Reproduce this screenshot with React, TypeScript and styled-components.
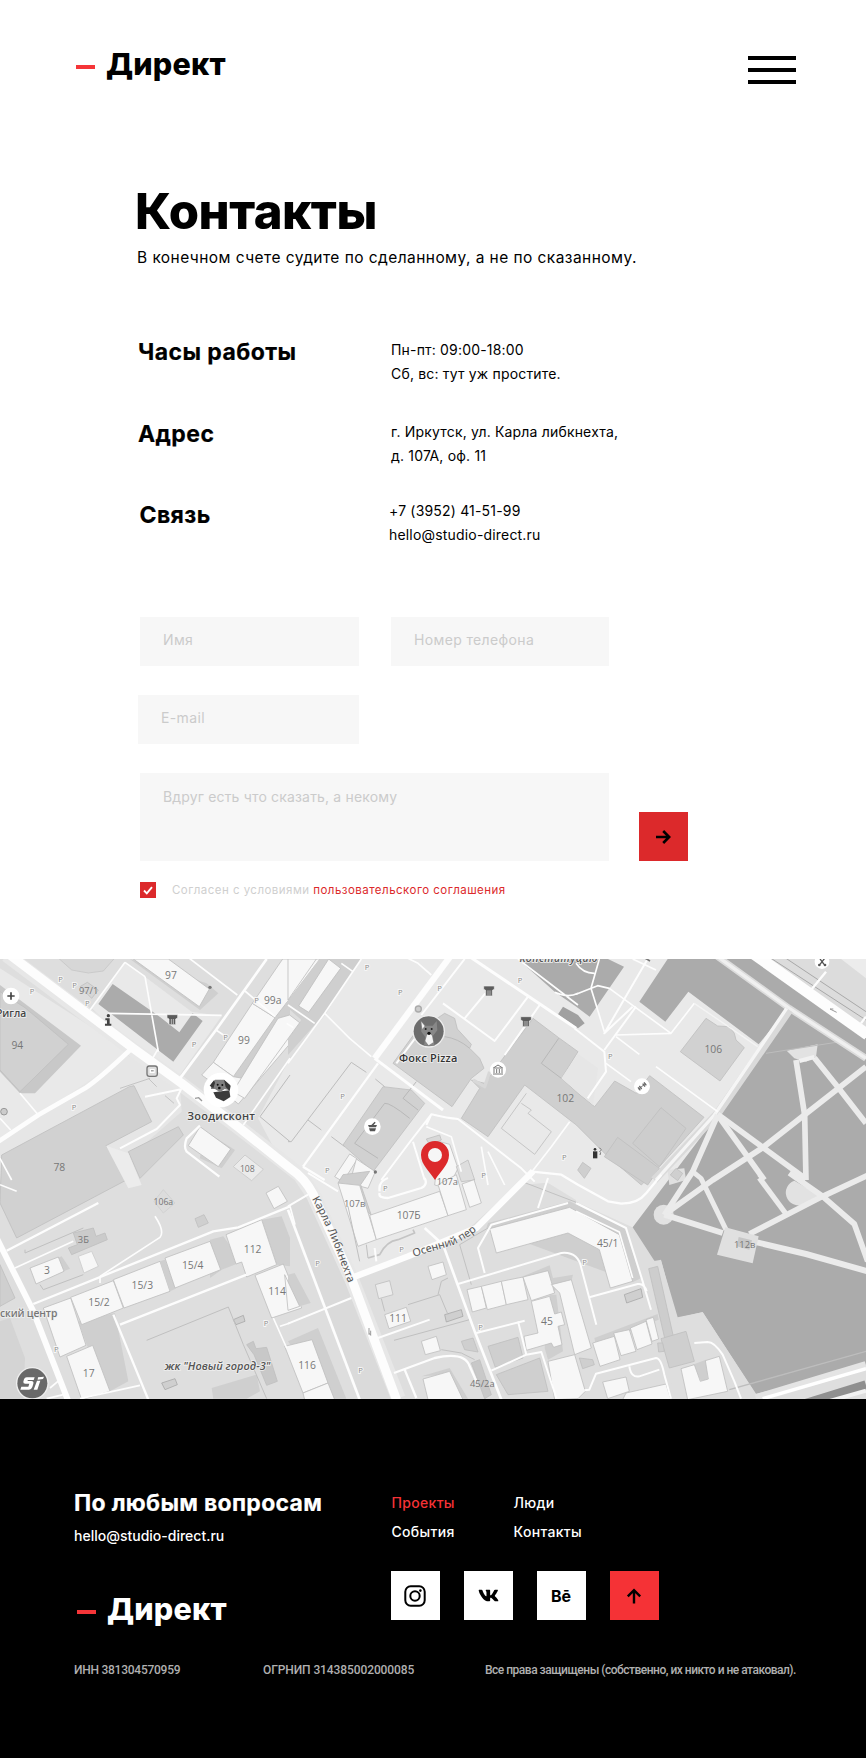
import React from 'react';
import styled, { createGlobalStyle } from 'styled-components';
import { FaVk } from 'react-icons/fa';

const GlobalStyle = createGlobalStyle`
  * { box-sizing: border-box; }
  body { margin: 0; background: #fff; color: #000; font-family: Inter, "Open Sans", sans-serif; }
  a { color: inherit; text-decoration: none; }
`;

const Page = styled.div`
  width: 866px;
  overflow: hidden;
`;

const Header = styled.header`
  display: flex;
  justify-content: space-between;
  align-items: flex-start;
  height: 184px;
  padding: 46px 70px 0 76px;
`;

const Logo = styled.a`
  display: flex;
  align-items: center;
  gap: 11px;
  font-size: 30.5px;
  line-height: 36px;
  font-weight: 800;
  letter-spacing: 0.2px;

  &::before {
    content: '';
    width: 19px;
    height: 4px;
    margin-top: 6px;
    background: #f53538;
  }
`;

const MenuButton = styled.button`
  display: flex;
  flex-direction: column;
  gap: 8px;
  width: 48px;
  margin-top: 10px;
  padding: 0;
  border: 0;
  background: none;
`;

const MenuLine = styled.span`
  height: 4px;
  background: #000;
`;

const Main = styled.main`
  padding-left: 137px;
  height: 775px;
`;

const Title = styled.h1`
  margin: 0 0 6px -2px;
  font-size: 49px;
  line-height: 56px;
  font-weight: 800;
  letter-spacing: -0.5px;
`;

const Lead = styled.p`
  margin: 0 0 68px;
  font-size: 15.5px;
  line-height: 24px;
  letter-spacing: 0.44px;
`;

const InfoList = styled.dl`
  margin: 0 0 70px;
`;

const InfoRow = styled.div<{ $gap?: number; $shift?: number }>`
  display: grid;
  grid-template-columns: ${(p) => 254 - (p.$shift ?? 0)}px auto;
  margin-top: ${(p) => p.$gap ?? 0}px;
`;

const InfoLabel = styled.dt<{ $indent?: number; $drop?: number }>`
  padding: ${(p) => p.$drop ?? 0}px 0 0 ${(p) => p.$indent ?? 1}px;
  font-size: 23px;
  line-height: 28px;
  font-weight: 700;
  letter-spacing: 0.42px;
  -webkit-text-stroke: 0.2px currentColor;
`;

const InfoValue = styled.dd`
  margin: 0;
  font-size: 14px;
  line-height: 24px;
  letter-spacing: 0.18px;
`;

const Form = styled.form`
  padding-left: 3px;
`;

const Fields = styled.div`
  display: grid;
  grid-template-columns: 219px 218px;
  column-gap: 32px;
  row-gap: 29px;
  justify-content: start;
`;

const Input = styled.input<{ $outset?: number }>`
  height: 49px;
  margin-left: -${(p) => p.$outset ?? 0}px;
  padding: 0 22px 5px 23px;
  border: 0;
  border-radius: 0;
  background: #f7f7f7;
  font: 14px Inter, sans-serif;
  letter-spacing: 0.36px;
  &::placeholder { color: #cbcbcb; opacity: 1; }
`;

const MessageRow = styled.div`
  display: flex;
  align-items: flex-end;
  gap: 30px;
  margin: 29px 0 21px;
`;

const Message = styled.textarea`
  display: block;
  width: 469px;
  height: 88px;
  padding: 12px 22px 12px 23px;
  border: 0;
  resize: none;
  background: #f7f7f7;
  font: 14px/24px Inter, sans-serif;
  letter-spacing: 0.17px;
  &::placeholder { color: #cbcbcb; opacity: 1; }
`;

const Submit = styled.button`
  display: grid;
  place-items: center;
  width: 49px;
  height: 49px;
  padding: 0 2px 0 0;
  border: 0;
  background: #dc292b;
`;

const Consent = styled.label`
  display: flex;
  align-items: center;
  font-size: 11.5px;
  line-height: 16px;
  letter-spacing: 0.47px;
  color: #cfcfcf;
  white-space: pre;
`;

const CheckBox = styled.span`
  display: grid;
  place-items: center;
  width: 16px;
  height: 16px;
  margin-right: 16px;
  background: #dc292b;
`;

const TermsLink = styled.a`
  color: #dc292b !important;
`;

const MapBox = styled.section`
  height: 440px;
  svg { display: block; }
  text { font-family: "Open Sans", "Noto Sans", sans-serif; }
`;

const Footer = styled.footer`
  height: 359px;
  padding: 90px 70px 0 74px;
  background: #000;
  color: #fff;
`;

const FooterTop = styled.div`
  display: grid;
  grid-template-columns: 317px auto;
  height: 138px;
`;

const FooterHeading = styled.h2`
  margin: 0 0 7px -1px;
  padding-left: 1px;
  font-size: 23px;
  line-height: 28px;
  font-weight: 700;
  letter-spacing: 0.3px;
  white-space: nowrap;
  -webkit-text-stroke: 0.2px currentColor;
`;

const FooterMail = styled.a`
  display: block;
  margin-bottom: 43px;
  font-size: 14px;
  line-height: 24px;
  font-weight: 500;
  letter-spacing: 0;
`;

const FooterLogo = styled(Logo)`
  margin-left: 3px;
`;

const Nav = styled.nav`
  display: grid;
  grid-template-columns: 122px auto;
  justify-content: start;
  margin: -1px 0 25px;
  font-size: 14px;
  line-height: 29px;
  font-weight: 500;
  letter-spacing: 0.32px;
`;

const NavLink = styled.a<{ $active?: boolean }>`
  color: ${(p) => (p.$active ? '#f53236' : '#fff')} !important;
  padding-left: 0.5px;
`;

const Socials = styled.div`
  display: flex;
  gap: 24px;
`;

const Social = styled.a<{ $accent?: boolean }>`
  display: grid;
  place-items: center;
  width: 49px;
  height: 49px;
  padding-right: 1px;
  background: ${(p) => (p.$accent ? '#f53236' : '#fff')};
  color: #000 !important;
  font-size: 16px;
  line-height: 18px;
  font-weight: 700;
`;

const Legal = styled.div`
  display: grid;
  grid-template-columns: 189px 222px auto;
  margin-top: 35px;
  font-family: Roboto, sans-serif;
  font-size: 12px;
  line-height: 16px;
  font-weight: 500;
  color: #b0b0b0;
`;

const LegalItem = styled.span<{ $tracking?: number }>`
  letter-spacing: ${(p) => p.$tracking ?? 0}px;
  white-space: nowrap;
`;

/* ---------- map ---------- */

// The map is drawn on a 2598x1320 sheet split into six tiles.
const TILES: Record<string, [number, number]> = {
  nw: [0, -12], n: [864, -12], ne: [1728, -12],
  sw: [0, 657], s: [864, 657], se: [1728, 657],
};

type Area = [tile: string, fill: string, points: string, stroke?: string];
type Road = [tile: string, width: number, d: string, color?: string];
type Label = [tile: string, x: number, y: number, text: string, size?: number];

const LAND = '#e9e9e9';
const BLOCK = '#dedede';
const PARK = '#ababab';
const HOUSE = '#f7f7f7';
const BIG = '#d1d1d1';
const EDGE = '#bfbfbf';
const SHADE = '#cfcfcf';

const ground: Area[] = [
  ['nw', LAND, '0,40 0,555 110,480 255,400 390,290'],
  ['nw', '#e6e6e6', '0,560 380,300 540,385 545,470 350,640 300,675 60,780 0,675'],
  ['nw', '#d7d7d7', '165,0 215,45 265,54 310,48 352,0', '#c6c6c6'],
  ['nw', LAND, '375,22 435,65 575,170 665,183 540,360 400,275 275,160'],
  ['nw', '#e8e8e8', '778,490 870,350 870,590'],
  ['n', LAND, '220,0 870,0 870,675 700,690 560,820 190,965 60,700 -20,620 -90,490 0,320 115,175'],
  ['ne', LAND, '0,0 420,0 640,165 430,475 170,817 0,740'],
  ['s', LAND, '0,0 60,0 190,280 360,235 560,150 740,-10 870,70 1040,150 1060,0'],
  ['s', '#dedede', '500,190 700,10 870,75 1010,150 1100,420 560,420'],
  ['s', '#dadada', '0,85 60,50 190,300 330,662 215,662 0,95'],
];

const parks: Area[] = [
  ['nw', PARK, '338,87 295,147 520,320 608,198 578,175 538,232 475,182'],
  ['n', PARK, '690,12 960,12 1008,35 905,185 865,155 800,110'],
  ['n', '#a0a0a0', '825,155 870,180 890,205 870,220 810,178'],
  ['ne', PARK, '275,12 430,12 632,165 548,268 337,110 268,200 190,140'],
  ['ne', PARK, '420,12 560,12 870,240 870,1240 540,1316 380,1072 305,1087 255,917 235,917 170,817 425,480 635,165'],
  ['ne', '#dcdcdc', '560,0 870,0 870,235'],
  ['ne', '#ececec', '780,0 870,0 870,70'],
];

const buildings: Area[] = [
  ['nw', '#c8c8c8', '0,90 60,135 243,272 105,415 60,415 0,350'],
  ['nw', BIG, '0,110 75,158 205,268 60,410 0,345', EDGE],
  ['nw', '#d6d6d6', '240,95 262,82 295,105 275,130', EDGE],
  ['nw', SHADE, '390,12 600,165 655,115 620,85'],
  ['nw', HOUSE, '400,12 598,155 628,102 505,12', EDGE],
  ['nw', SHADE, '700,365 870,120 870,210 740,375'],
  ['nw', HOUSE, '640,322 757,145 825,188 700,365', EDGE],
  ['nw', HOUSE, '757,145 848,12 960,12 870,130 825,188', EDGE],
  ['nw', HOUSE, '605,360 640,322 700,365 740,372 870,205 905,225 715,447 660,400', EDGE],
  ['nw', BIG, '5,600 388,395 402,392 455,500 318,572 385,672 50,849 0,744', EDGE],
  ['nw', BIG, '385,590 535,515 550,540 420,670', EDGE],
  ['nw', '#ececec', '318,572 385,595 425,690 385,700'],
  ['nw', SHADE, '610,525 705,585 665,640 600,610'],
  ['nw', HOUSE, '600,515 692,582 655,635 565,572', EDGE],
  ['nw', '#ebebeb', '735,600 790,643 755,677 700,635', '#c8c8c8'],

  ['n', SHADE, '95,12 220,12 115,170 0,300 0,250 40,195 -10,150'],
  ['n', HOUSE, '122,12 158,40 62,172 32,153', EDGE],
  ['n', HOUSE, '-30,190 5,180 35,203 -130,430 -165,410', EDGE],
  ['n', HOUSE, '0,12 85,12 0,135', EDGE],
  ['n', BIG, '380,235 470,175 500,190 508,222 550,268 545,280 575,310 588,340 550,370 492,455 315,325', EDGE],
  ['n', BIG, '285,395 370,405 410,445 255,650 210,610 165,570', EDGE],
  ['n', '#cfcfcf', '735,190 812,248 870,290 820,370 870,415 920,455 980,378 1045,415 1085,362 1248,487 1110,640 1060,690 955,600 865,510 710,390 600,545 520,490 575,400 550,375 590,385 645,310', EDGE],
  ['n', '#e6e6e6', '820,370 870,297 930,340 915,450'],
  ['n', HOUSE, '140,665 185,597 208,612 165,680', EDGE],
  ['n', HOUSE, '205,612 262,650 240,700 185,685', EDGE],
  ['n', '#d8d8d8', '415,552 455,540 460,555 425,570', EDGE],
  ['n', HOUSE, '455,560 485,568 510,640 480,700 440,690', EDGE],
  ['n', '#dedede', '505,635 540,615 560,675 520,680', EDGE],
  ['ne', BIG, '390,190 425,213 460,215 475,235 480,255 505,278 432,378 313,290', EDGE],
  ['ne', '#cdcdcd', '170,565 255,458 330,520 250,635', EDGE],
  ['ne', '#cdcdcd', '85,605 125,547 250,640 215,690', EDGE],
  ['ne', SHADE, '5,645 20,622 45,640 25,670', EDGE],
  ['ne', '#e0e0e0', '275,645 325,640 330,675 280,690'],
  ['ne', SHADE, '283,660 300,640 320,655 305,677', EDGE],
  ['ne', '#e2e2e2', '632,287 725,268 720,305 690,320 655,310'],

  ['sw', '#dcdcdc', '462,70 490,35 525,75 490,105', '#cfcfcf'],
  ['sw', HOUSE, '798,45 835,25 862,70 822,92', EDGE],
  ['sw', SHADE, '585,122 612,110 625,135 595,148', EDGE],
  ['sw', '#cbcbcb', '205,210 232,200 220,165 280,150 288,175 315,165 322,185 215,230', EDGE],
  ['sw', HOUSE, '235,235 275,220 295,265 252,285', '#cccccc'],
  ['sw', SHADE, '100,270 185,235 210,272 110,312'],
  ['sw', HOUSE, '90,270 175,237 192,280 108,318', EDGE],
  ['sw', SHADE, '235,430 345,405 385,610 330,640 260,500'],
  ['sw', SHADE, '630,185 670,175 725,252 665,275 630,300'],
  ['sw', SHADE, '785,125 845,115 870,180 870,265 830,260'],
  ['sw', HOUSE, '130,390 212,360 258,502 180,537', EDGE],
  ['sw', HOUSE, '212,358 340,308 370,390 245,440', EDGE],
  ['sw', HOUSE, '340,305 480,250 510,340 372,390', EDGE],
  ['sw', SHADE, '480,250 495,245 527,332 510,340'],
  ['sw', HOUSE, '495,240 630,190 662,275 525,330', EDGE],
  ['sw', HOUSE, '678,170 785,125 830,260 740,297 725,252 708,258', EDGE],
  ['sw', HOUSE, '765,292 850,258 905,390 815,420', EDGE],
  ['sw', HOUSE, '200,535 278,502 330,640 245,665', EDGE],
  ['sw', SHADE, '700,425 730,412 735,430 708,440', '#aaa'],
  ['sw', SHADE, '485,615 525,602 532,620 495,635', '#aaa'],
  ['sw', '#c8c8c8', '740,500 760,490 768,512 800,508 832,610 800,622 762,530', EDGE],
  ['sw', SHADE, '635,630 770,590 780,640 740,662 640,662'],
  ['sw', SHADE, '0,260 45,360 0,385', EDGE],
  ['sw', '#d4d4d4', '0,430 30,420 75,540 70,662 0,662'],

  ['s', SHADE, '0,290 20,285 68,375 0,395'],
  ['s', HOUSE, '-10,290 35,385 0,397', EDGE],
  ['s', SHADE, '0,490 90,450 175,662 120,662'],
  ['s', HOUSE, '-10,505 72,485 120,615 45,645', EDGE],
  ['s', HOUSE, '45,645 120,615 140,665 50,665', EDGE],
  ['s', '#cfcfcf', '150,15 165,-10 245,-20 218,20 250,112', EDGE],
  ['s', HOUSE, '150,15 215,22 265,185 210,205', EDGE],
  ['s', HOUSE, '245,112 455,40 480,113 265,185', EDGE],
  ['s', HOUSE, '450,20 505,-10 535,95 480,113', EDGE],
  ['s', HOUSE, '522,18 558,5 580,75 545,88', EDGE],
  ['s', HOUSE, '420,265 465,252 475,290 432,305', EDGE],
  ['s', '#ececec', '262,320 305,308 315,350 272,362', EDGE],
  ['s', HOUSE, '290,410 355,388 368,430 303,452', EDGE],
  ['s', HOUSE, '400,490 445,475 457,518 412,530', EDGE],
  ['s', SHADE, '470,410 520,395 525,415 475,432', '#aaa'],
  ['s', SHADE, '520,490 555,480 570,522 530,515', EDGE],
  ['s', SHADE, '595,150 600,135 845,70 1010,150 1060,300 1035,312'],
  ['s', HOUSE, '605,152 845,88 994,170 1034,310 967,330 934,215 840,165 625,225', EDGE],
  ['s', SHADE, '705,295 785,262 795,300 855,290 850,310 795,340'],
  ['s', HOUSE, '537,335 580,325 595,390 553,402', EDGE],
  ['s', HOUSE, '580,325 640,310 655,380 598,395', EDGE],
  ['s', HOUSE, '640,310 705,297 720,365 655,380', EDGE],
  ['s', HOUSE, '705,297 780,278 800,345 730,368', EDGE],
  ['s', SHADE, '785,350 805,350 825,520 780,545 770,510'],
  ['s', HOUSE, '730,370 785,355 800,408 820,402 830,440 810,445 822,500 797,508 790,495 715,517 708,475 750,465', EDGE],
  ['s', HOUSE, '790,320 850,305 910,510 860,530 815,345', EDGE],
  ['s', HOUSE, '780,550 860,530 892,640 870,662 800,665', EDGE],
  ['s', '#cfcfcf', '600,505 690,478 705,540 622,568', EDGE],
  ['s', '#cfcfcf', '625,590 755,540 780,640 660,650', EDGE],
  ['s', SHADE, '400,595 485,570 540,662 525,662 480,590'],
  ['s', HOUSE, '405,603 485,580 525,665 420,665', EDGE],
  ['s', '#c8c8c8', '550,555 575,545 610,650 590,662', EDGE],

  ['se', SHADE, '145,350 195,332 200,358 152,375', '#aaa'],
  ['se', SHADE, '55,480 245,408 248,425 60,500'],
  ['se', '#dedede', '305,420 380,402 540,650 300,662 270,560'],
  ['se', '#dedede', '235,250 255,245 310,455 290,470'],
  ['se', '#cdcdcd', '218,272 245,265 292,475 266,480', EDGE],
  ['se', HOUSE, '50,495 115,475 132,545 72,565', EDGE],
  ['se', HOUSE, '113,465 160,455 180,520 135,533', EDGE],
  ['se', HOUSE, '163,450 210,430 228,498 183,515', EDGE],
  ['se', HOUSE, '210,425 232,418 248,483 228,490', EDGE],
  ['se', SHADE, '255,482 330,460 355,550 280,570', EDGE],
  ['se', SHADE, '245,495 260,495 265,520 248,522', EDGE],
  ['se', SHADE, '10,540 50,545 55,560 20,572', EDGE],
  ['se', HOUSE, '80,612 150,597 160,640 95,662', EDGE],
  ['se', SHADE, '350,560 390,545 395,605 375,608'],
  ['se', HOUSE, '315,572 355,560 373,610 397,603 388,548 430,535 455,640 335,665', EDGE],
  ['se', HOUSE, '150,645 270,618 285,665 140,665', EDGE],
];

const outlines: Road[] = [
  ['nw', 3, 'M870,360 L780,485 L870,560', '#bbb'],
  ['nw', 3, 'M445,370 L470,395 M495,422 L522,445 M360,400 L390,390 L450,370', '#c4c4c4'],
  ['n', 3, 'M235,352 L190,322 L10,560 L0,560 M60,495 L100,525 M262,372 L290,395 M130,545 L170,575', '#bdbdbd'],
  ['n', 3, 'M290,445 L200,565 L270,610 M290,445 Q305,442 365,490 M385,380 L345,430 L390,465', '#b8b8b8'],
  ['n', 3, 'M812,250 L760,325 L820,370', '#b8b8b8'],
  ['n', 3, 'M715,415 L640,520 L740,598 L790,530 L720,475 L730,465 L700,445', '#c6c6c6'],
  ['n', 3, 'M470,245 Q510,250 545,280', '#bbb'],
  ['n', 10, 'M555,375 L590,395 L605,350', '#d8d8d8'],
  ['sw', 3, 'M440,487 L685,387 L730,500 L800,662 M75,215 L75,225 L250,150 M120,320 L130,335 L250,290', '#c0c0c0'],
  ['s', 3, 'M290,400 L280,362 M360,380 L455,350 L480,410 M318,487 L545,425 M450,350 L460,310 L480,300 M180,85 L215,250 M235,200 L240,240', '#c0c0c0'],
  ['s', 5, 'M240,240 L275,230 Q295,190 330,185 L380,165 L375,155', '#c4c4c4'],
  ['s', 3, 'M700,10 L870,75 M600,150 L515,200 L550,320 M460,515 L520,525 L560,545', '#c2c2c2'],
  ['ne', 3, 'M570,295 L780,262', '#bdbdbd'],
  ['se', 4, 'M460,635 L870,520', '#bdbdbd'],
];

const parkPaths: Road[] = [
  ['ne', 20, 'M418,0 L640,160 L870,310', '#dcdcdc'],
  ['ne', 10, 'M418,0 L640,160 L870,310', '#f0f0f0'],
  ['ne', 24, 'M640,165 L425,475 L235,675', '#dadada'],
  ['ne', 10, 'M632,160 L415,480 L240,675', '#f5f5f5'],
  ['ne', 17, 'M425,478 L690,672', '#ebebeb'],
  ['ne', 17, 'M425,480 L565,675', '#ebebeb'],
  ['ne', 17, 'M425,480 L350,650 L265,780', '#ebebeb'],
  ['ne', 17, 'M870,335 L560,578 L410,675 L265,779', '#ebebeb'],
  ['ne', 17, 'M690,675 L686,480 L660,315', '#ebebeb'],
  ['ne', 17, 'M715,308 L790,402 L870,505', '#ebebeb'],
  ['ne', 12, 'M670,318 L715,306', '#f1f1f1'],
  ['ne', 15, 'M350,650 L375,670 L450,824', '#ebebeb'],
  ['se', 18, 'M265,110 L440,165', '#ebebeb'],
  ['se', 16, 'M550,0 L628,105', '#ebebeb'],
  ['se', 16, 'M560,-10 L550,0', '#ebebeb'],
  ['se', 17, 'M875,-8 L740,55 L520,168', '#ebebeb'],
  ['se', 17, 'M640,-15 L740,55 L835,138 L875,250', '#ebebeb'],
  ['se', 18, 'M530,190 L690,228 L875,280', '#ebebeb'],
  ['se', 26, 'M540,662 L870,562', '#e4e4e4'],
  ['se', 10, 'M560,662 L870,572', '#fff'],
  ['se', 30, 'M650,690 L870,622', '#8f8f8f'],
  ['se', 12, 'M740,675 L870,638', '#f2f2f2'],
];

const roads: Road[] = [
  ['nw', 44, 'M20,0 L400,285 L545,388 L720,520 L900,660 L940,720 L1054,970 L1195,1330', '#e7e7e7'],
  ['nw', 14, 'M-5,560 L115,480 L255,400 Q300,370 390,285'],
  ['nw', 27, 'M30,0 L400,280 L545,385 L720,520 L870,640 Q915,670 940,719 L1054,969 L1190,1335'],
  ['nw', 8, 'M540,370 L648,225 L800,12'],
  ['nw', 5, 'M555,0 L712,120 M648,225 L675,243 M735,108 L825,185 M860,205 L880,218'],
  ['nw', 5, 'M325,175 L665,181 M435,65 L475,290 M375,22 L435,65 M375,22 L270,165 M475,280 L455,315'],
  ['nw', 6, 'M360,580 L470,522 L540,450 L530,430 L543,403 L435,425'],
  ['nw', 7, 'M600,512 L560,550 Q550,575 560,590 L658,665'],
  ['nw', 5, 'M60,415 L115,480 M0,490 L32,525 M0,610 L35,675 M730,510 L870,310'],
  ['n', 19, 'M490,0 L260,310'],
  ['n', 7, 'M270,325 L45,635 M45,635 L110,675'],
  ['n', 5, 'M220,12 L110,175 L0,325 M110,175 L185,250 L250,305 M160,25 L195,50 M0,150 L80,205 M340,0 L390,25 L430,60'],
  ['n', 9, 'M260,310 L465,465'],
  ['n', 6, 'M415,510 L430,478 Q480,490 510,492 L700,640 L740,680 M430,478 L370,555 L280,675 M375,560 L410,675'],
  ['n', 5, 'M415,515 L490,545 L520,650 M580,575 L600,690 M600,590 L650,690'],
  ['n', 5, 'M845,500 L790,575 L720,665'],
  ['n', 6, 'M400,180 L530,12 M465,145 L620,258 L720,125 M530,190 L592,115 M755,150 L650,300 M325,325 L385,245'],
  ['n', 9, 'M545,5 L864,220'],
  ['n', 5, 'M800,112 Q840,130 870,115 M690,12 L870,150'],
  ['ne', 6, 'M-5,220 L85,290 L90,350 L35,430 M215,12 L85,235 L170,155 M85,285 L180,155'],
  ['ne', 5, 'M0,118 L65,92 L100,100 L285,235 M120,240 L285,235 L355,145 M120,245 L190,298 M240,335 L425,470 M45,100 L85,230 M70,12 L45,100 M0,25 Q20,55 55,55 M170,12 L240,45 M90,325 L165,380'],
  ['ne', 4, 'M355,145 L545,275', '#f4f4f4'],
  ['ne', 34, 'M510,-20 L875,240'],
  ['ne', 3, 'M570,0 L870,195 M615,0 L870,170', '#a8a8a8'],
  ['ne', 7, 'M705,105 L750,50 M855,205 L870,185'],
  ['sw', 18, 'M-10,180 L45,290 L100,400 L205,670'],
  ['sw', 7, 'M100,378 L640,160 L715,148 L870,85'],
  ['sw', 7, 'M360,440 L740,290 M20,218 L295,75 M340,410 L445,665'],
  ['sw', 5, 'M45,270 L220,190 M300,295 L300,315 M300,295 L480,178 Q495,160 465,115 M870,85 L885,140 M820,420 L860,510 M840,445 L870,435 M0,20 L50,40 M140,662 L190,650 M240,662 L420,622 M150,630 L180,605'],
  ['s', 8, 'M0,95 L215,665'],
  ['s', 6, 'M0,437 L190,360 M0,85 L60,50 M270,480 L425,425 M60,-15 L150,40 M265,250 L260,210'],
  ['s', 19, 'M190,300 L360,235 L565,150 L735,-20'],
  ['s', 8, 'M410,150 L465,200 L560,460 L640,665'],
  ['s', 6, 'M510,318 L820,225 Q870,220 880,270 L925,440 M590,285 L570,210 L610,140 L840,75 M750,90 L780,0 M565,465 L710,428 M690,430 L715,530 L610,578 M715,530 L760,522 L805,660'],
  ['s', 7, 'M318,585 L440,540 Q530,520 545,565 L565,610 M350,575 L385,660 M275,40 Q270,10 300,0 M275,45 Q270,60 300,60 L400,30 Q420,20 410,0'],
  ['s', 7, 'M725,-20 L820,-10 L870,20 L960,70 L1000,77 Q1050,77 1075,45 L1120,-10'],
  ['se', 6, 'M0,75 L150,150 L200,310 L225,395 M40,358 L185,318 Q205,315 212,340'],
  ['se', 5, 'M0,100 L130,162 L170,300'],
  ['se', 6, 'M355,495 L395,492 Q415,492 440,530 L475,610 L495,662 M25,637 L40,635 L60,587 L240,540 Q255,540 265,590 L285,662 M160,565 Q165,600 190,595 L250,575'],
];

const numbers: Label[] = [
  ['nw', 513, 72, '97'], ['nw', 266, 118, '97/1', 28], ['nw', 52, 281, '94'], ['nw', 732, 268, '99'],
  ['nw', 818, 148, '99а'], ['nw', 178, 647, '78'], ['nw', 742, 651, '108', 26],
  ['n', 832, 440, '102'], ['n', 478, 690, '107а', 28], ['ne', 412, 294, '106'],
  ['sw', 490, 80, '106а', 26], ['sw', 250, 196, '3Б', 28], ['sw', 141, 288, '3'], ['sw', 297, 385, '15/2'],
  ['sw', 427, 333, '15/3'], ['sw', 578, 272, '15/4'], ['sw', 758, 224, '112'], ['sw', 831, 350, '114'],
  ['sw', 266, 598, '17'], ['s', 57, 574, '116'], ['s', 200, 86, '107в', 28], ['s', 362, 124, '107Б'],
  ['s', 330, 433, '111'], ['s', 777, 442, '45'], ['s', 583, 628, '45/2а', 28], ['se', 95, 206, '45/1'], ['se', 506, 210, '112в', 28],
];

const parking: [string, number, number][] = [
  ['nw', 182, 72], ['nw', 224, 92], ['nw', 96, 110], ['nw', 262, 146], ['nw', 770, 137], ['nw', 677, 246],
  ['nw', 582, 269], ['nw', 222, 457], ['n', 237, 37], ['n', 337, 112], ['n', 455, 101], ['n', 696, 77],
  ['n', 164, 424], ['n', 118, 647], ['n', 829, 608], ['n', 587, 662], ['ne', 103, 305], ['sw', 798, 437],
  ['sw', 169, 514], ['s', 292, 31], ['s', 341, 214], ['s', 89, 257], ['s', 578, 449], ['s', 218, 577], ['se', 26, 254],
];

const at = (tile: string) => `translate(${TILES[tile][0]} ${TILES[tile][1]})`;

const Areas = ({ items }: { items: Area[] }) => (
  <>
    {items.map(([tile, fill, points, stroke], i) => (
      <polygon key={i} transform={at(tile)} points={points} fill={fill} stroke={stroke ?? 'none'} strokeWidth={2.5} />
    ))}
  </>
);

const Lines = ({ items }: { items: Road[] }) => (
  <>
    {items.map(([tile, width, d, color], i) => (
      <path key={i} transform={at(tile)} d={d} fill="none" stroke={color ?? '#fdfdfd'} strokeWidth={width} strokeLinejoin="round" />
    ))}
  </>
);

const Monument = ({ x, y }: { x: number; y: number }) => (
  <g transform={`translate(${x} ${y})`} stroke="#eee" strokeWidth={2} fill="#5c5c5c">
    <path d="M-16,-15 H16 V-5 L10,-2 V15 H-10 V-2 L-16,-5 Z" />
    <path d="M-3,-2 V14 M3,-2 V14" />
  </g>
);

const CityMap = () => (
  <svg width="866" height="440" viewBox="0 0 2598 1320" aria-label="Карта">
    <rect width="2598" height="1320" fill={BLOCK} />
    <Areas items={ground} />
    <Areas items={parks} />
    <Areas items={buildings} />
    <g transform={at('se')}>
      <circle cx="263" cy="110" r="30" fill="#e2e2e2" />
      <path d="M655,8 A38,38 0 0 0 680,80 L730,52 Z" fill="#e2e2e2" />
    </g>
    <Lines items={outlines} />
    <Lines items={parkPaths} />
    <Lines items={roads} />
    <g transform={at('se')}>
      <polygon points="448,148 548,175 530,256 423,230" fill="#e0e0e0" />
      <polygon points="488,177 528,187 520,215 482,205" fill="#c6c6c6" />
    </g>

    <g textAnchor="middle" fontSize="23" fill="#8d8d8d" stroke="#f6f6f6" strokeWidth="6" paintOrder="stroke">
      {parking.map(([tile, x, y], i) => (
        <text key={i} transform={at(tile)} x={x} y={y + 8}>P</text>
      ))}
    </g>
    <g textAnchor="middle" fill="#777" fontWeight="500">
      {numbers.map(([tile, x, y, text, size], i) => (
        <text key={i} transform={at(tile)} x={x} y={y} fontSize={size ?? 31}>{text}</text>
      ))}
    </g>

    {/* points of interest */}
    <g transform={at('nw')}>
      <circle cx="33" cy="123" r="25" fill="#fff" />
      <path d="M33,112 V134 M22,123 H44" stroke="#444" strokeWidth="5" />
      <g fill="#444" stroke="#eee" strokeWidth="3" paintOrder="stroke">
        <path d="M316,190 H329 V206 H334 V212 H315 V206 H321 V196 H316 Z" />
        <circle cx="325" cy="182" r="5" />
      </g>
      <Monument x={517} y={194} />
      <rect x="441" y="333" width="31" height="31" rx="7" fill="#ddd" stroke="#777" strokeWidth="4" />
      <path d="M449,342 H464 V354 H449 Z" fill="#fff" /><path d="M453,346 H461 V349 H453 Z" fill="#777" />
      <path d="M585,430 L596,428 L606,438" stroke="#999" strokeWidth="4" fill="none" />
      <circle cx="630" cy="97" r="5" fill="#777" />
      <circle cx="12" cy="470" r="10" fill="#ccc" stroke="#999" strokeWidth="3" />
      <circle cx="663" cy="405" r="52" fill="#fff" />
      <path d="M640,412 L688,406 L691,426 L671,439 L648,428 Z" fill="#3b3b3b" />
      <path d="M633,388 L645,374 L672,374 L690,390 L688,406 L674,402 L660,412 L645,402 L633,402 Z" fill="#808080" />
      <path d="M629,392 L642,376 L645,384 L640,400 Z M672,374 L692,392 L689,408 L677,396 Z" fill="#383838" />
      <circle cx="653" cy="389" r="3" fill="#111" /><circle cx="667" cy="390" r="3" fill="#111" /><circle cx="658" cy="399" r="4" fill="#111" />
    </g>
    <g transform={at('n')}>
      <Monument x={603} y={108} />
      <Monument x={714} y={200} />
      <circle cx="422" cy="229" r="49" fill="#eee" />
      <circle cx="422" cy="229" r="45" fill="#6d6d6d" />
      <path d="M398,196 L412,212 L434,212 L446,198 L448,226 L434,244 L440,272 H408 L412,246 L400,230 Z" fill="#888" />
      <path d="M400,200 L410,213 L403,222 Z M417,240 Q425,232 432,242 L436,262 L422,271 L412,258 Z" fill="#f3f3f3" />
      <circle cx="413" cy="222" r="3" fill="#222" /><circle cx="431" cy="222" r="3" fill="#222" /><circle cx="423" cy="235" r="5" fill="#111" />
      <circle cx="391" cy="162" r="9" fill="#ccc" stroke="#aaa" strokeWidth="4" />
      <circle cx="630" cy="344" r="24" fill="#fff" />
      <path d="M616,339 L630,330 L644,339 Z M618,342 V354 M626,342 V354 M634,342 V354 M642,342 V354 M615,357 H645" fill="none" stroke="#777" strokeWidth="3" />
      <circle cx="253" cy="515" r="25" fill="#fff" />
      <path d="M240,510 H267 L264,517 H243 Z M243,520 H264 L261,529 H246 Z M250,510 L260,500 L263,503 L256,511 Z" fill="#555" />
      <circle cx="262" cy="651" r="5" fill="#777" />
    </g>
    <g transform={at('ne')}>
      <circle cx="198" cy="394" r="24" fill="#fff" />
      <path d="M188,402 L208,386" stroke="#777" strokeWidth="3" />
      <path d="M186,397 L193,406 M190,393 L197,402 M200,386 L207,395 M204,382 L211,391" stroke="#666" strokeWidth="4" />
      <circle cx="738" cy="20" r="22" fill="#fff" />
      <path d="M731,10 L744,28 M746,10 L732,28" stroke="#555" strokeWidth="4" />
      <circle cx="730" cy="30" r="4" fill="#555" /><circle cx="747" cy="30" r="4" fill="#555" />
      <rect x="51" y="589" width="13" height="21" fill="#333" /><circle cx="57" cy="583" r="4" fill="#333" />
      <path d="M70,578 L76,584 M70,590 L76,586 M72,600 L74,592" stroke="#777" strokeWidth="3" />
      <path d="M762,162 L782,172 M762,162 L772,162" stroke="#999" strokeWidth="3" />
      <path d="M208,10 L222,18" stroke="#777" strokeWidth="5" />
    </g>
    <g transform={at('s')}>
      <path d="M243,450 V470 M248,458 V472 L244,466" stroke="#999" strokeWidth="3" fill="none" />
    </g>
    <g transform={at('sw')}>
      <circle cx="97" cy="616" r="49" fill="#eee" />
      <circle cx="97" cy="616" r="45" fill="#696969" />
      <path d="M104,598 H80 Q74,598 72,604 L70,611 Q69,617 76,617 H88 L85,626 H64 L61,635 H87 Q94,635 97,627 L100,617 Q102,609 94,609 H82 L84,606 H101 Z M111,608 H121 L112,635 H101 Z M114,598 L132,596 L129,603 L113,605 Z" fill="#fff" />
    </g>

    {/* names */}
    <g fill="#555" stroke="#efefef" strokeWidth="5" paintOrder="stroke" fontWeight="600">
      <g transform={at('nw')} fill="#444">
        <text x="-12" y="187" fontSize="31">Ригла</text>
        <text x="562" y="495" fontSize="33" textLength="203">Зоодисконт</text>
      </g>
      <g transform={at('n')} fill="#333">
        <text x="333" y="320" fontSize="33" textLength="175">Фокс Pizza</text>
        <text x="680" y="22" fontSize="31" fontStyle="italic" textLength="248" fill="#555">"Конституцию</text>
      </g>
      <g transform={at('sw')}>
        <text x="0" y="417" fontSize="31" textLength="172" fill="#777">ский центр</text>
        <text x="494" y="577" fontSize="33" fontStyle="italic" textLength="317">жк "Новый город-3"</text>
      </g>
      <g transform={at('s')} fontWeight="500" fill="#4c4c4c">
        <path id="karla" d="M72,62 Q125,160 155,245 L184,325" fill="none" stroke="none" />
        <text fontSize="32" strokeWidth="3"><textPath href="#karla" textLength="276">Карла Либкнехта</textPath></text>
        <path id="osenniy" d="M377,236 L500,200 Q540,180 575,150" fill="none" stroke="none" />
        <text fontSize="32" strokeWidth="3"><textPath href="#osenniy" textLength="207">Осенний пер</textPath></text>
      </g>
    </g>

    <g transform={at('n')}>
      <path d="M441,675 C426,650 399,630 399,600 A42,42 0 0 1 483,600 C483,630 456,650 441,675 Z" fill="#dc292b" />
      <circle cx="441" cy="600" r="21" fill="#f6f6f6" />
    </g>
  </svg>
);

const ArrowIcon = ({ up = false }: { up?: boolean }) => (
  <svg width="16" height="16" viewBox="0 0 16 16" fill="none" stroke="#000" strokeWidth={up ? 2.4 : 2.6}>
    {up ? <path d="M8,15.5 V2 M1.8,8.4 L8,2.2 L14.2,8.4" /> : <path d="M1,8 H14 M8.2,2 L14.2,8 L8.2,14" />}
  </svg>
);

const InstagramIcon = () => (
  <svg width="22" height="22" viewBox="0 0 22 22" fill="none" stroke="#000" strokeWidth="2">
    <rect x="1.3" y="1.3" width="19.4" height="19.4" rx="5.4" />
    <circle cx="11" cy="11" r="4.7" />
    <circle cx="16.4" cy="5.6" r="1.3" fill="#000" stroke="none" />
  </svg>
);

export default function App() {
  return (
    <Page>
      <GlobalStyle />
      <Header>
        <Logo href="#">Директ</Logo>
        <MenuButton aria-label="Меню"><MenuLine /><MenuLine /><MenuLine /></MenuButton>
      </Header>

      <Main>
        <Title>Контакты</Title>
        <Lead>В конечном счете судите по сделанному, а не по сказанному.</Lead>
        <InfoList>
          <InfoRow>
            <InfoLabel>Часы работы</InfoLabel>
            <InfoValue>Пн-пт: 09:00-18:00<br />Сб, вс: тут уж простите.</InfoValue>
          </InfoRow>
          <InfoRow $gap={34}>
            <InfoLabel>Адрес</InfoLabel>
            <InfoValue>г. Иркутск, ул. Карла либкнехта,<br />д. 107А, оф. 11</InfoValue>
          </InfoRow>
          <InfoRow $gap={31} $shift={2}>
            <InfoLabel $indent={2.5} $drop={2}>Связь</InfoLabel>
            <InfoValue>+7 (3952) 41-51-99<br />hello@studio-direct.ru</InfoValue>
          </InfoRow>
        </InfoList>

        <Form>
          <Fields>
            <Input placeholder="Имя" />
            <Input placeholder="Номер телефона" />
            <Input placeholder="E-mail" $outset={2} />
          </Fields>
          <MessageRow>
            <Message placeholder="Вдруг есть что сказать, а некому" />
            <Submit type="button" aria-label="Отправить"><ArrowIcon /></Submit>
          </MessageRow>
          <Consent>
            <CheckBox>
              <svg width="10" height="9" viewBox="0 0 10 9" fill="none" stroke="#fff" strokeWidth="1.9"><path d="M1,4.5 L3.8,7.3 L9,1.2" /></svg>
            </CheckBox>
            <span>Согласен с условиями </span><TermsLink href="#">пользовательского соглашения</TermsLink>
          </Consent>
        </Form>
      </Main>

      <MapBox><CityMap /></MapBox>

      <Footer>
        <FooterTop>
          <div>
            <FooterHeading>По любым вопросам</FooterHeading>
            <FooterMail href="#">hello@studio-direct.ru</FooterMail>
            <FooterLogo href="#">Директ</FooterLogo>
          </div>
          <div>
            <Nav>
              <NavLink href="#" $active>Проекты</NavLink>
              <NavLink href="#">Люди</NavLink>
              <NavLink href="#">События</NavLink>
              <NavLink href="#">Контакты</NavLink>
            </Nav>
            <Socials>
              <Social href="#" aria-label="Instagram"><InstagramIcon /></Social>
              <Social href="#" aria-label="VK"><FaVk size={21} /></Social>
              <Social href="#">Bē</Social>
              <Social href="#" $accent aria-label="Наверх"><ArrowIcon up /></Social>
            </Socials>
          </div>
        </FooterTop>
        <Legal>
          <LegalItem $tracking={-0.25}>ИНН 381304570959</LegalItem>
          <LegalItem $tracking={-0.1}>ОГРНИП 314385002000085</LegalItem>
          <LegalItem $tracking={-0.5}>Все права защищены (собственно, их никто и не атаковал).</LegalItem>
        </Legal>
      </Footer>
    </Page>
  );
}
